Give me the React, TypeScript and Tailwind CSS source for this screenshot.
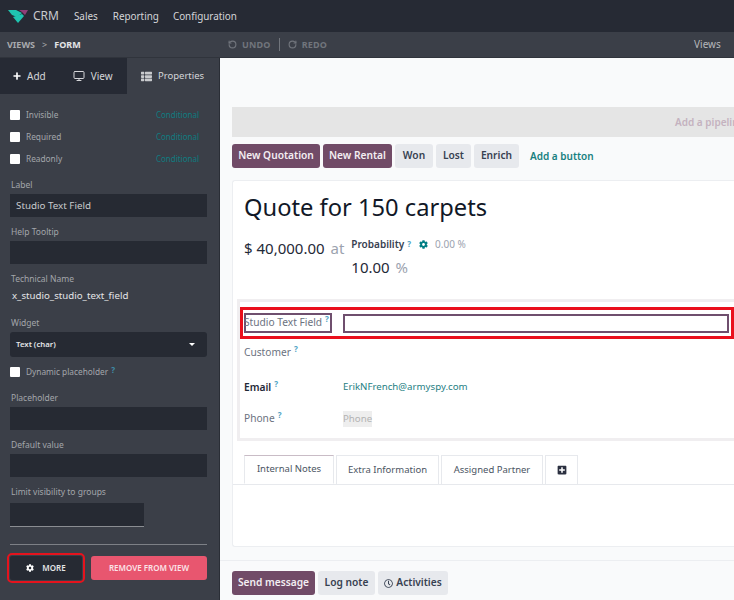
import React from "react";
import { Plus, Monitor, RotateCcw, RotateCw } from "lucide-react";
import { FaCog, FaPlusSquare, FaRegClock, FaThList } from "react-icons/fa";

const Hint = ({ className = "text-[#4fa3c4]" }: { className?: string }) => (
  <span className={`inline-block align-top leading-none text-[8px] font-bold ml-[3px] ${className}`}>?</span>
);

const Check = ({ label, hint }: { label: string; hint?: boolean }) => (
  <div className="flex items-center gap-[6px] h-[12px]">
    <span className="w-[10px] h-[10px] bg-white rounded-[1px] shrink-0"></span>
    <span className="text-[8.3px] text-[#a3a6ab]">
      {label}
      {hint && <Hint className="text-[#3f8ea8]" />}
    </span>
  </div>
);

const Row = ({ label }: { label: string }) => (
  <div className="flex items-center justify-between pr-[8px] h-[22px]">
    <Check label={label} />
    <span className="text-[8px] text-[#0e7c80]">Conditional</span>
  </div>
);

const Field = ({ label, value }: { label: string; value?: string }) => (
  <div className="mb-[9px]">
    <div className="text-[8.5px] leading-[12px] text-[#a3a6ab] mb-[3px] ml-px">{label}</div>
    <div className="h-[23px] bg-[#262a33] text-[9.8px] leading-[23px] text-[#c8cacd] px-[6px]">{value}</div>
  </div>
);

const Btn = ({ children, primary, w }: { children: React.ReactNode; primary?: boolean; w: string }) => (
  <button
    className={`h-[24px] rounded-[3px] text-[10.2px] font-semibold flex items-center justify-center ${w} ${
      primary ? "bg-[#714b67] text-[#f3eef2]" : "bg-[#e7e9ed] text-[#374151]"
    }`}
  >
    {children}
  </button>
);

const Tab = ({ label, w, active }: { label: string; w: string; active?: boolean }) => (
  <div
    className={`h-[29px] ${w} border border-[#e7e9ed] text-[9.5px] text-[#4b5563] flex items-center justify-center ${
      active ? "border-b-white border-t-[#c9bcc6] -mb-px" : "border-b-0"
    }`}
  >
    {label}
  </div>
);

const Logo = () => (
  <svg width="20" height="14" viewBox="0 0 20 14">
    <path d="M0 1 L8 1 L14 4 L9 8 L4 6 Z" fill="#1fc4b0" />
    <path d="M11 1 L20 1 L17 6 L14 3 Z" fill="#8f3f78" />
    <path d="M5 8 L14 5 L16 7 L10 14 Z" fill="#1fc4b0" />
  </svg>
);

export default function App() {
  return (
    <div
      className="w-[734px] h-[600px] overflow-hidden flex flex-col bg-[#f9fafb]"
      style={{ fontFamily: '"Noto Sans", sans-serif' }}
    >
      {/* top nav */}
      <div className="h-[32px] shrink-0 bg-[#262a34] flex items-center pl-[8px] text-[9.9px] text-[#d5d6d9]">
        <Logo />
        <span className="text-[12px] ml-[5px] mr-[15px] text-[#c9cbce]">CRM</span>
        <span className="mr-[15px]">Sales</span>
        <span className="mr-[14px]">Reporting</span>
        <span>Configuration</span>
      </div>

      {/* studio bar */}
      <div className="h-[26px] shrink-0 bg-[#3b3f48] flex items-center pl-[7px] text-[9px] font-bold border-b border-[#30343c]">
        <div className="w-[221px] flex items-center gap-[7px] text-[#a8aaae]">
          <span>VIEWS</span>
          <span className="font-normal">&gt;</span>
          <span className="text-[#e4e5e7]">FORM</span>
        </div>
        <div className="flex items-center text-[#71757c] tracking-[0.2px]">
          <RotateCcw className="w-[9px] h-[9px] mr-[5px]" strokeWidth={3} />
          <span>UNDO</span>
          <span className="w-px h-[13px] bg-[#71757c] mx-[8px]"></span>
          <RotateCw className="w-[9px] h-[9px] mr-[5px]" strokeWidth={3} />
          <span>REDO</span>
        </div>
        <div className="ml-[367px] text-[10px] font-normal text-[#b5b7bb]">Views</div>
      </div>

      <div className="flex flex-1 min-h-0">
        {/* sidebar */}
        <div className="w-[220px] shrink-0 bg-[#3b3f48] border-r border-[#2a2e36] flex flex-col">
          <div className="h-[36px] flex text-[10px] text-[#d5d6d9]">
            <div className="w-[127px] bg-[#262a34] flex items-center">
              <Plus className="w-[10px] h-[10px] ml-[12px] mr-[5px] text-white" strokeWidth={4} />
              <span>Add</span>
              <Monitor className="w-[12px] h-[12px] ml-[27px] mr-[6px]" />
              <span>View</span>
            </div>
            <div className="flex-1 flex items-center pl-[14px]">
              <FaThList className="w-[11px] h-[11px] mr-[6px] text-[#c8cacd]" />
              <span className="text-[9.5px]">Properties</span>
            </div>
          </div>

          <div className="pl-[10px] pr-[12px] pt-[10px] flex-1 flex flex-col">
            <Row label="Invisible" />
            <Row label="Required" />
            <Row label="Readonly" />

            <div className="h-[9px]"></div>
            <Field label="Label" value="Studio Text Field" />
            <Field label="Help Tooltip" />

            <div className="text-[8.5px] leading-[12px] text-[#a3a6ab] ml-px mb-[4px]">Technical Name</div>
            <div className="text-[9.7px] leading-[14px] text-[#e4e5e7] ml-[2px] mb-[14px]">x_studio_studio_text_field</div>

            <div className="text-[8.5px] leading-[12px] text-[#a3a6ab] ml-px mb-[3px]">Widget</div>
            <div className="h-[25px] rounded-[3px] bg-[#262a33] flex items-center justify-between px-[6px] mb-[8px]">
              <span className="text-[7.8px] font-semibold text-[#e4e5e7]">Text (char)</span>
              <span className="w-0 h-0 mr-[6px] border-x-[3px] border-x-transparent border-t-[3px] border-t-white"></span>
            </div>

            <div className="mb-[13px] h-[14px] flex items-center">
              <Check label="Dynamic placeholder" hint />
            </div>

            <Field label="Placeholder" value="" />
            <Field label="Default value" value="" />

            <div className="text-[8.5px] leading-[12px] text-[#a3a6ab] ml-px mb-[5px]">Limit visibility to groups</div>
            <div className="h-[24px] w-[134px] bg-[#262a33] border-b border-[#8a8d92]"></div>

            <div className="h-px bg-[#7d8086] mt-[17px] mb-[11px]"></div>

            <div className="flex gap-[9px]">
              <button className="w-[72px] h-[24px] rounded-[2px] bg-[#262a33] text-[8px] font-semibold text-[#e4e5e7] flex items-center justify-center gap-[8px] outline-[2px] outline-offset-[1px] outline-[#e5131d]">
                <FaCog className="w-[8px] h-[8px] text-white" />
                MORE
              </button>
              <button className="w-[116px] h-[24px] rounded-[3px] bg-[#e8566f] text-[8px] font-semibold text-[#fbe4e8]">
                REMOVE FROM VIEW
              </button>
            </div>
          </div>
        </div>

        {/* form */}
        <div className="flex-1 min-w-0 pl-[12px] pt-[49px]">
          <div className="h-[30px] bg-[#e5e5e5] flex items-center pl-[443px] text-[10px] font-semibold text-[#c4b2bf] whitespace-nowrap overflow-hidden">
            Add a pipeline status bar
          </div>

          <div className="flex items-center mt-[7px]">
            <Btn primary w="w-[88px] mr-[3px]">New Quotation</Btn>
            <Btn primary w="w-[69px] mr-[3px]">New Rental</Btn>
            <Btn w="w-[38px] mr-[3px]">Won</Btn>
            <Btn w="w-[35px] mr-[3px]">Lost</Btn>
            <Btn w="w-[45px]">Enrich</Btn>
            <span className="ml-[11px] text-[10px] font-semibold text-[#17807f]">Add a button</span>
          </div>

          <div className="h-[367px] mt-[12px] bg-white border border-[#eceef1] border-r-0 rounded-l-[3px]">
            <div className="px-[11px] pt-[9px]">
              <h1 className="text-[23.7px] leading-[34px] text-[#111827] whitespace-nowrap">Quote for 150 carpets</h1>
              <div className="flex mt-[12px]">
                <div className="text-[15px] leading-[24px] text-[#1f2937] mr-[7px] whitespace-nowrap">
                  $ 40,000.00 <span className="text-[#9ca3af] ml-[2px]">at</span>
                </div>
                <div className="-mt-px">
                  <div className="flex items-center text-[10px] leading-[16px] h-[18px]">
                    <span className="font-semibold text-[#374151]">Probability</span>
                    <Hint />
                    <FaCog className="w-[9px] h-[9px] ml-[8px] text-[#017e84]" />
                    <span className="ml-[7px] text-[#9ca3af]">0.00 %</span>
                  </div>
                  <div className="text-[15px] leading-[24px] text-[#1f2937] mt-[2px]">
                    10.00 <span className="text-[#9ca3af] ml-[2px]">%</span>
                  </div>
                </div>
              </div>
            </div>

            {/* field group */}
            <div className="ml-[4px] mt-[20px] h-[142px] border-[3px] border-r-0 border-[#f0eef0] pt-[5px] text-[10.2px] text-[#6b7280]">
              <div className="h-[32px] border-[3px] border-[#ea0f1c] flex items-center pl-px">
                <div className="w-[88px] h-[20px] border-2 border-[#6f4f6e] flex items-center whitespace-nowrap">
                  <span className="-ml-[2px]">Studio Text Field<Hint /></span>
                </div>
                <div className="w-[386px] h-[19px] ml-[11px] border-2 border-[#6f4f6e]"></div>
              </div>
              <div className="pl-[4px] h-[26px] mt-px flex items-center">
                <span>Customer<Hint /></span>
              </div>
              <div className="pl-[4px] h-[35px] mt-[4px] flex items-center">
                <span className="w-[99px]">
                  <span className="font-semibold text-[#1f2937]">Email</span><Hint />
                </span>
                <span className="text-[9.7px] text-[#268083]">ErikNFrench@armyspy.com</span>
              </div>
              <div className="pl-[4px] h-[26px] mt-px flex items-center">
                <span className="w-[99px]">Phone<Hint /></span>
                <span className="bg-[#eeeeee] text-[9.7px] text-[#b3b3b3] leading-[16px]">Phone</span>
              </div>
            </div>

            {/* notebook */}
            <div className="mt-[14px] pl-[11px] flex gap-[2px] border-b border-[#e7e9ed]">
              <Tab label="Internal Notes" w="w-[90px]" active />
              <Tab label="Extra Information" w="w-[103px]" />
              <Tab label="Assigned Partner" w="w-[102px]" />
              <div className="h-[29px] w-[33px] border border-b-0 border-[#e7e9ed] flex items-center justify-center">
                <FaPlusSquare className="w-[10px] h-[10px] text-[#2b3040]" />
              </div>
            </div>
          </div>

          {/* chatter */}
          <div className="border-t border-[#eceef1] -ml-[12px] mt-[13px] pl-[12px] pt-[10px] flex gap-[3px]">
            <Btn primary w="w-[83px]">Send message</Btn>
            <Btn w="w-[57px]">Log note</Btn>
            <Btn w="w-[70px] gap-[3px]">
              <FaRegClock className="w-[9px] h-[9px]" />
              Activities
            </Btn>
          </div>
        </div>
      </div>
    </div>
  );
}
